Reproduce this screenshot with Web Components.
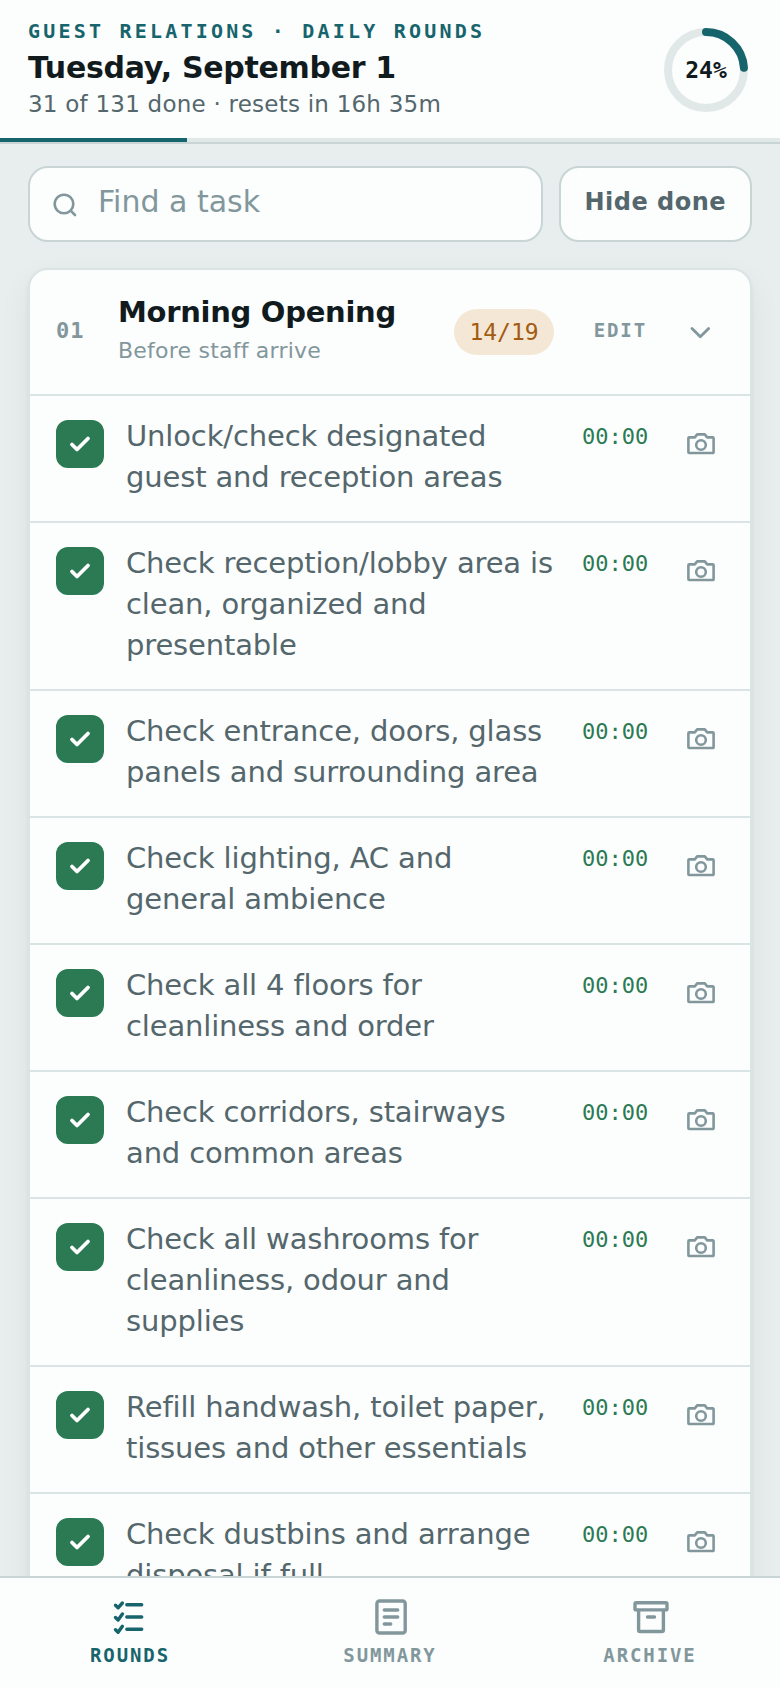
<!DOCTYPE html>
<html lang="en">
<head>
<meta charset="utf-8">
<meta name="viewport" content="width=device-width, initial-scale=1">
<title>Daily Rounds</title>
<style>
  :root {
    --bg: #e8eeee;
    --surface: #fcfdfd;
    --ink: #111b1d;
    --text: #54676c;
    --faint: #82979c;
    --line: #dbe4e5;
    --border: #c9d5d5;
    --track: #e1e8e8;
    --teal: #16646c;
    --green: #2b7a53;
    --mono: "DejaVu Sans Mono", monospace;
  }
  body {
    margin: 0;
    background: var(--bg);
    color: var(--ink);
    font-family: "DejaVu Sans", sans-serif;
  }
</style>
</head>
<body>
<rounds-app>
  <rounds-header slot="header" done="31" total="131">
    <span slot="eyebrow">GUEST RELATIONS · DAILY ROUNDS</span>
    <span slot="title">Tuesday, September 1</span>
    <span slot="status">31 of 131 done · resets in 16h 35m</span>
  </rounds-header>

  <task-filter></task-filter>

  <round-section number="01" count="14/19">
    <span slot="title">Morning Opening</span>
    <span slot="note">Before staff arrive</span>
    <task-row time="00:00">Unlock/check designated guest and reception areas</task-row>
    <task-row time="00:00">Check reception/lobby area is clean, organized and presentable</task-row>
    <task-row time="00:00">Check entrance, doors, glass panels and surrounding area</task-row>
    <task-row time="00:00">Check lighting, AC and general ambience</task-row>
    <task-row time="00:00">Check all 4 floors for cleanliness and order</task-row>
    <task-row time="00:00">Check corridors, stairways and common areas</task-row>
    <task-row time="00:00">Check all washrooms for cleanliness, odour and supplies</task-row>
    <task-row time="00:00">Refill handwash, toilet paper, tissues and other essentials</task-row>
    <task-row time="00:00">Check dustbins and arrange disposal if full</task-row>
  </round-section>

  <nav-tab slot="nav" icon="rounds" active>ROUNDS</nav-tab>
  <nav-tab slot="nav" icon="summary">SUMMARY</nav-tab>
  <nav-tab slot="nav" icon="archive">ARCHIVE</nav-tab>
</rounds-app>

<script>
  const BUTTON_RESET = `
    button {
      margin: 0;
      padding: 0;
      border: none;
      background: none;
      color: inherit;
      font: inherit;
      cursor: pointer;
    }
    svg {
      display: block;
      fill: none;
      stroke: currentColor;
      stroke-linecap: round;
      stroke-linejoin: round;
    }
  `;

  class RoundsApp extends HTMLElement {
    constructor() {
      super();
      this.attachShadow({ mode: "open" });
      this.shadowRoot.innerHTML = `
        <style>
          :host {
            display: flex;
            flex-direction: column;
            height: 100vh;
          }
          main {
            flex: 1;
            min-height: 0;
            overflow-y: auto;
            scrollbar-width: none;
            display: flex;
            flex-direction: column;
            gap: 26px;
            padding: 22px 28px;
            box-sizing: border-box;
          }
          nav {
            display: grid;
            grid-template-columns: repeat(3, 1fr);
            border-top: 2px solid var(--border);
            background: var(--surface);
          }
        </style>
        <slot name="header"></slot>
        <main><slot></slot></main>
        <nav><slot name="nav"></slot></nav>
      `;
    }
  }

  class RoundsHeader extends HTMLElement {
    constructor() {
      super();
      this.attachShadow({ mode: "open" });
    }

    connectedCallback() {
      const percent = Math.round(
        (this.getAttribute("done") / this.getAttribute("total")) * 100
      );

      this.shadowRoot.innerHTML = `
        <style>
          :host {
            display: block;
            background: var(--surface);
            border-bottom: 2px solid var(--border);
          }
          header {
            display: flex;
            align-items: center;
            justify-content: space-between;
            padding: 18px 28px 17px;
          }
          .eyebrow {
            margin: 0 0 5px;
            color: var(--teal);
            font: bold 20px/26px var(--mono);
            letter-spacing: 0.16em;
          }
          h1 {
            margin: 0;
            font-size: 30px;
            line-height: 38px;
            letter-spacing: -0.01em;
          }
          .status {
            margin: 0;
            color: var(--text);
            font-size: 23px;
            line-height: 34px;
            letter-spacing: 0.01em;
          }
          .ring {
            display: grid;
            place-items: center;
            width: 92px;
            height: 92px;
            font: bold 23px/26px var(--mono);
          }
          .ring > * {
            grid-area: 1 / 1;
          }
          svg {
            fill: none;
            stroke-width: 8;
            stroke-linecap: round;
          }
          .track {
            height: 4px;
            background: var(--track);
          }
          .bar {
            width: ${percent}%;
            height: 100%;
            background: var(--teal);
          }
        </style>
        <header>
          <div>
            <p class="eyebrow"><slot name="eyebrow"></slot></p>
            <h1><slot name="title"></slot></h1>
            <p class="status"><slot name="status"></slot></p>
          </div>
          <div class="ring">
            <svg width="92" height="92" viewBox="0 0 92 92" aria-hidden="true">
              <circle cx="46" cy="46" r="38" stroke="var(--track)"/>
              <circle cx="46" cy="46" r="38" stroke="var(--teal)" pathLength="100"
                stroke-dasharray="${percent} 100" transform="rotate(-90 46 46)"/>
            </svg>
            <span>${percent}%</span>
          </div>
        </header>
        <div class="track"><div class="bar"></div></div>
      `;
    }
  }

  class TaskFilter extends HTMLElement {
    constructor() {
      super();
      this.attachShadow({ mode: "open" });
      this.shadowRoot.innerHTML = `
        <style>
          ${BUTTON_RESET}
          :host {
            display: flex;
            gap: 16px;
          }
          .search, button {
            box-sizing: border-box;
            height: 76px;
            border: 2px solid var(--border);
            border-radius: 20px;
            background: var(--surface);
          }
          .search {
            flex: 1;
            display: flex;
            align-items: center;
            gap: 18px;
            padding: 0 22px;
            color: var(--faint);
          }
          .search svg {
            margin-top: 4px;
          }
          input {
            flex: 1;
            min-width: 0;
            padding: 0 0 4px;
            border: none;
            outline: none;
            background: none;
            color: var(--ink);
            font: inherit;
            font-size: 30px;
            line-height: 36px;
          }
          input::placeholder {
            color: var(--faint);
            opacity: 1;
          }
          button {
            padding: 0 24px 4px;
            color: var(--text);
            font-size: 24px;
            font-weight: bold;
            letter-spacing: 0.02em;
          }
        </style>
        <label class="search">
          <svg width="28" height="28" viewBox="0 0 28 28" stroke-width="2.6" aria-hidden="true">
            <circle cx="12" cy="12" r="9.3"/>
            <path d="M18.6 18.6L23 23"/>
          </svg>
          <input type="search" placeholder="Find a task" aria-label="Find a task">
        </label>
        <button type="button">Hide done</button>
      `;
    }
  }

  class RoundSection extends HTMLElement {
    constructor() {
      super();
      this.attachShadow({ mode: "open" });
    }

    connectedCallback() {
      this.shadowRoot.innerHTML = `
        <style>
          ${BUTTON_RESET}
          :host {
            display: block;
            flex: none;
            border: 2px solid var(--line);
            border-radius: 20px;
            background: var(--surface);
            box-shadow: 0 2px 4px rgba(17, 27, 29, 0.05), 0 12px 32px rgba(17, 27, 29, 0.06);
          }
          .head {
            display: flex;
            align-items: center;
            padding: 26px;
          }
          .number {
            width: 62px;
            padding-bottom: 2px;
            color: var(--faint);
            font: bold 22px/26px var(--mono);
            letter-spacing: 0.04em;
          }
          .titles {
            flex: 1;
          }
          h2 {
            margin: 0 0 6px;
            font-size: 29px;
            line-height: 32px;
            letter-spacing: -0.01em;
          }
          .note {
            margin: 0;
            color: var(--faint);
            font-size: 22px;
            line-height: 34px;
            letter-spacing: 0.01em;
          }
          .count {
            padding: 0 15px;
            border-radius: 23px;
            background: #f4e7d5;
            color: #a35b12;
            font: 23px/46px var(--mono);
          }
          .edit {
            padding: 0 11px 4px 40px;
            color: var(--faint);
            font: bold 19px/26px var(--mono);
            letter-spacing: 0.1em;
          }
          .toggle {
            display: grid;
            place-items: center;
            width: 46px;
            height: 46px;
            margin-left: 20px;
            color: var(--faint);
          }
        </style>
        <div class="head">
          <span class="number">${this.getAttribute("number")}</span>
          <div class="titles">
            <h2><slot name="title"></slot></h2>
            <p class="note"><slot name="note"></slot></p>
          </div>
          <span class="count">${this.getAttribute("count")}</span>
          <button class="edit" type="button">EDIT</button>
          <button class="toggle" type="button" aria-label="Collapse section">
            <svg width="28" height="28" viewBox="0 0 28 28" stroke-width="2.8" aria-hidden="true">
              <path d="M5 10.5l8.3 8.3L21.6 10.5"/>
            </svg>
          </button>
        </div>
        <slot></slot>
      `;
    }
  }

  class TaskRow extends HTMLElement {
    constructor() {
      super();
      this.attachShadow({ mode: "open" });
    }

    connectedCallback() {
      this.shadowRoot.innerHTML = `
        <style>
          ${BUTTON_RESET}
          :host {
            display: flex;
            align-items: flex-start;
            gap: 22px;
            padding: 20px 26px 23px;
            border-top: 2px solid var(--line);
          }
          .check {
            display: grid;
            place-items: center;
            margin-top: 4px;
            color: #fff;
          }
          .check > * {
            grid-area: 1 / 1;
          }
          .check svg {
            pointer-events: none;
          }
          input {
            appearance: none;
            box-sizing: border-box;
            width: 48px;
            height: 48px;
            margin: 0;
            border: 2px solid var(--border);
            border-radius: 12px;
            cursor: pointer;
          }
          input:checked {
            border-color: var(--green);
            background: var(--green);
          }
          label {
            flex: 1;
            color: var(--text);
            font-size: 29px;
            line-height: 41px;
            letter-spacing: -0.005em;
          }
          time {
            width: 74px;
            color: var(--green);
            font: 22px/42px var(--mono);
          }
          button {
            display: grid;
            place-items: center;
            width: 46px;
            height: 54px;
            color: var(--faint);
          }
        </style>
        <span class="check">
          <input id="done" type="checkbox" checked>
          <svg width="24" height="24" viewBox="0 0 24 24" stroke-width="3.8" aria-hidden="true">
            <path d="M4 12.5l5 5L20 6.5"/>
          </svg>
        </span>
        <label for="done"><slot></slot></label>
        <time>${this.getAttribute("time")}</time>
        <button type="button" aria-label="Add photo">
          <svg width="32" height="32" viewBox="0 0 32 32" stroke-width="2.6" aria-hidden="true">
            <path d="M4.2 10.4h5.6l2.4-3h7.600l2.4 3h5.6a.8.8 0 0 1 .8.8V25.200a.8.8 0 0 1-.8.8H4.200a.8.8 0 0 1-.8-.8V11.200a.8.8 0 0 1 .8-.8z"/>
            <circle cx="16" cy="18" r="4.8"/>
          </svg>
        </button>
      `;
    }
  }

  const TAB_ICONS = {
    rounds: `
      <path d="M14.8 5.7H29.7M14.8 18H29.7M14.8 30.3H29.7"/>
      <path d="M3.5 6.3l2.6 2.5 4.3-4.8M3.5 18.5l2.6 2.5 4.3-6M3.5 30.8l2.6 2.5 4.3-6"/>`,
    summary: `
      <rect x="4.9" y="2" width="28.3" height="32" rx="2.6"/>
      <path d="M12.3 11H25.7M12.3 18H25.7M12.3 25H18.7"/>`,
    archive: `
      <rect x="3" y="3.7" width="32" height="7.2" rx="1.2"/>
      <path d="M6.6 11.5V30.9a1.6 1.6 0 0 0 1.6 1.6H29.8a1.6 1.6 0 0 0 1.6-1.6V11.5M15.5 18H22.5"/>`,
  };

  class NavTab extends HTMLElement {
    constructor() {
      super();
      this.attachShadow({ mode: "open" });
    }

    connectedCallback() {
      this.shadowRoot.innerHTML = `
        <style>
          ${BUTTON_RESET}
          :host {
            display: block;
            color: var(--faint);
          }
          :host([active]) {
            color: var(--teal);
          }
          button {
            display: flex;
            flex-direction: column;
            align-items: center;
            gap: 9px;
            width: 100%;
            padding: 21px 0 22px;
            font: bold 19px/22px var(--mono);
            letter-spacing: 0.1em;
          }
          svg {
            overflow: visible;
          }
        </style>
        <button type="button">
          <svg width="36" height="36" viewBox="0 0 36 36" stroke-width="3.4" aria-hidden="true">
            ${TAB_ICONS[this.getAttribute("icon")]}
          </svg>
          <slot></slot>
        </button>
      `;
    }
  }

  customElements.define("rounds-app", RoundsApp);
  customElements.define("rounds-header", RoundsHeader);
  customElements.define("task-filter", TaskFilter);
  customElements.define("round-section", RoundSection);
  customElements.define("task-row", TaskRow);
  customElements.define("nav-tab", NavTab);
</script>
</body>
</html>
